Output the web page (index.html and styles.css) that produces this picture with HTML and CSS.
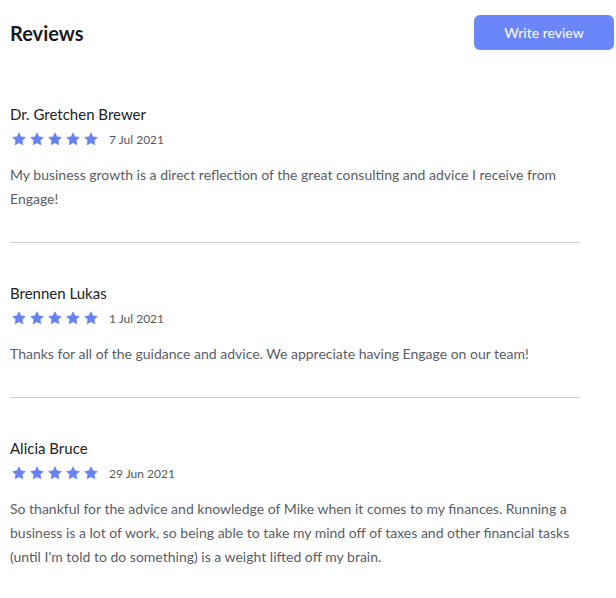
FILE: index.html
```html
<!DOCTYPE html>
<html>
<head>
<meta charset="utf-8">
<link rel="stylesheet" href="styles.css">
</head>
<body>
<div class="page">
  <header class="head">
    <h1 class="title">Reviews</h1>
    <button class="btn">Write review</button>
  </header>
  <div class="list">
    <article class="review">
      <div class="name">Dr. Gretchen Brewer</div>
      <div class="meta">
        <span class="stars">
          <svg viewBox="0 0 24 24"><path d="M12 1.3L15.29 8.27L22.94 9.25L17.33 14.53L18.76 22.1L12 18.4L5.24 22.1L6.67 14.53L1.06 9.25L8.71 8.27Z"/></svg>
          <svg viewBox="0 0 24 24"><path d="M12 1.3L15.29 8.27L22.94 9.25L17.33 14.53L18.76 22.1L12 18.4L5.24 22.1L6.67 14.53L1.06 9.25L8.71 8.27Z"/></svg>
          <svg viewBox="0 0 24 24"><path d="M12 1.3L15.29 8.27L22.94 9.25L17.33 14.53L18.76 22.1L12 18.4L5.24 22.1L6.67 14.53L1.06 9.25L8.71 8.27Z"/></svg>
          <svg viewBox="0 0 24 24"><path d="M12 1.3L15.29 8.27L22.94 9.25L17.33 14.53L18.76 22.1L12 18.4L5.24 22.1L6.67 14.53L1.06 9.25L8.71 8.27Z"/></svg>
          <svg viewBox="0 0 24 24"><path d="M12 1.3L15.29 8.27L22.94 9.25L17.33 14.53L18.76 22.1L12 18.4L5.24 22.1L6.67 14.53L1.06 9.25L8.71 8.27Z"/></svg>
        </span>
        <span class="date">7 Jul 2021</span>
      </div>
      <p class="text">My business growth is a direct reflection of the great consulting and advice I receive from Engage!</p>
    </article>
    <article class="review">
      <div class="name">Brennen Lukas</div>
      <div class="meta">
        <span class="stars">
          <svg viewBox="0 0 24 24"><path d="M12 1.3L15.29 8.27L22.94 9.25L17.33 14.53L18.76 22.1L12 18.4L5.24 22.1L6.67 14.53L1.06 9.25L8.71 8.27Z"/></svg>
          <svg viewBox="0 0 24 24"><path d="M12 1.3L15.29 8.27L22.94 9.25L17.33 14.53L18.76 22.1L12 18.4L5.24 22.1L6.67 14.53L1.06 9.25L8.71 8.27Z"/></svg>
          <svg viewBox="0 0 24 24"><path d="M12 1.3L15.29 8.27L22.94 9.25L17.33 14.53L18.76 22.1L12 18.4L5.24 22.1L6.67 14.53L1.06 9.25L8.71 8.27Z"/></svg>
          <svg viewBox="0 0 24 24"><path d="M12 1.3L15.29 8.27L22.94 9.25L17.33 14.53L18.76 22.1L12 18.4L5.24 22.1L6.67 14.53L1.06 9.25L8.71 8.27Z"/></svg>
          <svg viewBox="0 0 24 24"><path d="M12 1.3L15.29 8.27L22.94 9.25L17.33 14.53L18.76 22.1L12 18.4L5.24 22.1L6.67 14.53L1.06 9.25L8.71 8.27Z"/></svg>
        </span>
        <span class="date">1 Jul 2021</span>
      </div>
      <p class="text">Thanks for all of the guidance and advice. We appreciate having Engage on our team!</p>
    </article>
    <article class="review last">
      <div class="name">Alicia Bruce</div>
      <div class="meta">
        <span class="stars">
          <svg viewBox="0 0 24 24"><path d="M12 1.3L15.29 8.27L22.94 9.25L17.33 14.53L18.76 22.1L12 18.4L5.24 22.1L6.67 14.53L1.06 9.25L8.71 8.27Z"/></svg>
          <svg viewBox="0 0 24 24"><path d="M12 1.3L15.29 8.27L22.94 9.25L17.33 14.53L18.76 22.1L12 18.4L5.24 22.1L6.67 14.53L1.06 9.25L8.71 8.27Z"/></svg>
          <svg viewBox="0 0 24 24"><path d="M12 1.3L15.29 8.27L22.94 9.25L17.33 14.53L18.76 22.1L12 18.4L5.24 22.1L6.67 14.53L1.06 9.25L8.71 8.27Z"/></svg>
          <svg viewBox="0 0 24 24"><path d="M12 1.3L15.29 8.27L22.94 9.25L17.33 14.53L18.76 22.1L12 18.4L5.24 22.1L6.67 14.53L1.06 9.25L8.71 8.27Z"/></svg>
          <svg viewBox="0 0 24 24"><path d="M12 1.3L15.29 8.27L22.94 9.25L17.33 14.53L18.76 22.1L12 18.4L5.24 22.1L6.67 14.53L1.06 9.25L8.71 8.27Z"/></svg>
        </span>
        <span class="date">29 Jun 2021</span>
      </div>
      <p class="text">So thankful for the advice and knowledge of Mike when it comes to my finances. Running a business is a lot of work, so being able to take my mind off of taxes and other financial tasks (until I'm told to do something) is a weight lifted off my brain.</p>
    </article>
  </div>
</div>
</body>
</html>
```

FILE: styles.css
```css
* { box-sizing: border-box; }
html, body {
  margin: 0;
  padding: 0;
  background: #ffffff;
}
body {
  font-family: Lato, "Liberation Sans", sans-serif;
  color: #222222;
}
.page {
  padding: 15px 2px 0 10px;
}
.head {
  display: flex;
  justify-content: space-between;
  align-items: center;
  height: 35px;
  margin-bottom: 14px;
}
.title {
  margin: 0;
  font-size: 20px;
  font-weight: 700;
  color: #1c1c1c;
}
.btn {
  width: 140px;
  height: 35px;
  border: 0;
  border-radius: 6px;
  background: #6a86f9;
  color: #ffffff;
  font-family: Lato, "Liberation Sans", sans-serif;
  font-size: 14px;
  padding: 0;
}
.list {
  width: 570px;
}
.review {
  padding: 40px 0 31px;
  border-bottom: 1px solid #cdd0d6;
}
.review.last {
  border-bottom: 0;
}
.name {
  font-size: 15px;
  line-height: 20px;
  color: #222222;
  margin-bottom: 5px;
}
.meta {
  display: flex;
  align-items: center;
  height: 20px;
  margin-bottom: 14px;
}
.stars {
  display: flex;
  gap: 4px;
  padding-left: 2px;
}
.stars svg {
  width: 14px;
  height: 14px;
  fill: #6682f2;
  stroke: #6682f2;
  stroke-width: 1;
  stroke-linejoin: round;
  display: block;
}
.date {
  margin-left: 11px;
  font-size: 12px;
  color: #555a60;
}
.text {
  margin: 0;
  font-size: 14px;
  line-height: 24px;
  color: #5a5d66;
}
```
